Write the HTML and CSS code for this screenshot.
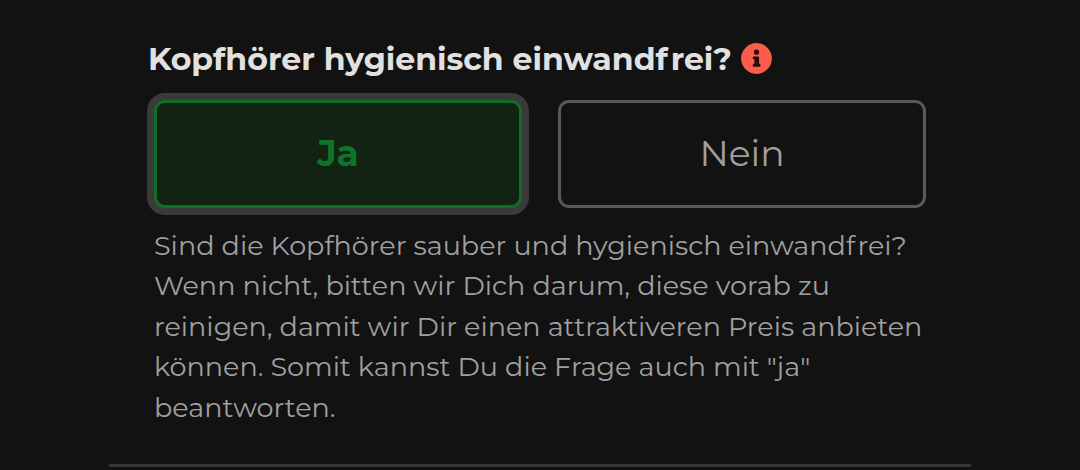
FILE: index.html
```
<!DOCTYPE html>
<html lang="de">
<head>
    <meta charset="UTF-8">
    <meta name="viewport" content="width=device-width, initial-scale=1.0">
    <title>Zustand</title>
    <link rel="stylesheet" href="styles.css">
</head>
<body>
    <section class="question">
        <h2 class="question-title">
            <span class="question-text">Kopfhörer hygienisch einwand<span class="wide">f</span>rei?</span>
            <svg class="info-icon" viewBox="0 0 512 512" role="img" aria-label="Info">
                <circle cx="256" cy="256" r="254" fill="#fc5d4a"/>
                <circle cx="256" cy="152" r="43" fill="#2b0f0c"/>
                <path fill="#2b0f0c" d="M208 222h78a12 12 0 0 1 12 12v110h10a12 12 0 0 1 12 12v24a12 12 0 0 1-12 12H208a12 12 0 0 1-12-12v-24a12 12 0 0 1 12-12h12v-74h-12a12 12 0 0 1-12-12v-24a12 12 0 0 1 12-12z"/>
            </svg>
        </h2>
        <div class="options">
            <button class="option selected" type="button">Ja</button>
            <button class="option" type="button">Nein</button>
        </div>
        <p class="hint">
            Sind die Kopfhörer sauber und hygienisch einwand<span class="wide">f</span>rei?<br>
            Wenn nicht, bitten wir Dich darum, diese vorab zu<br>
            reinigen, damit wir Dir einen attraktiveren Preis anbieten<br>
            können. Somit kannst Du die Frage auch mit "ja"<br>
            beantworten.
        </p>
    </section>
</body>
</html>
```
FILE: styles.css
```
body {
    margin: 0;
    height: 470px;
    overflow: hidden;
    background: #121212;
    color: #a0a0a0;
    font-family: Montserrat, Inter, sans-serif;
}
.question {
    box-sizing: border-box;
    width: 862px;
    height: 467px;
    margin-left: 109px;
    padding: 39px 45px 0;
    border-bottom: 3px solid #363636;
}
.question-title {
    display: flex;
    align-items: center;
    gap: 9px;
    height: 38px;
    margin: 0 0 23px -6px;
    color: #e1e1e1;
    font-size: 31.57px;
    font-weight: 700;
    line-height: 38px;
    white-space: nowrap;
}
.question-text {
    padding-top: 2px;
}
.wide {
    letter-spacing: 0.09em;
}
.info-icon {
    width: 31px;
    height: 31px;
}
.options {
    display: flex;
    gap: 36px;
}
.option {
    width: 368px;
    height: 108px;
    padding: 0 0 2px;
    border: 3px solid #595959;
    border-radius: 11px;
    background: #121212;
    color: #a0a0a0;
    font-family: inherit;
    font-size: 36px;
    font-weight: 400;
}
.option.selected {
    border-color: #106e2b;
    background: #122314;
    color: #0d742a;
    font-weight: 700;
    box-shadow: 0 0 0 7px #3a3a3a;
}
.hint {
    margin: 18px 0 0;
    font-size: 27.04px;
    font-weight: 400;
    line-height: 40.4px;
    white-space: nowrap;
}
```
